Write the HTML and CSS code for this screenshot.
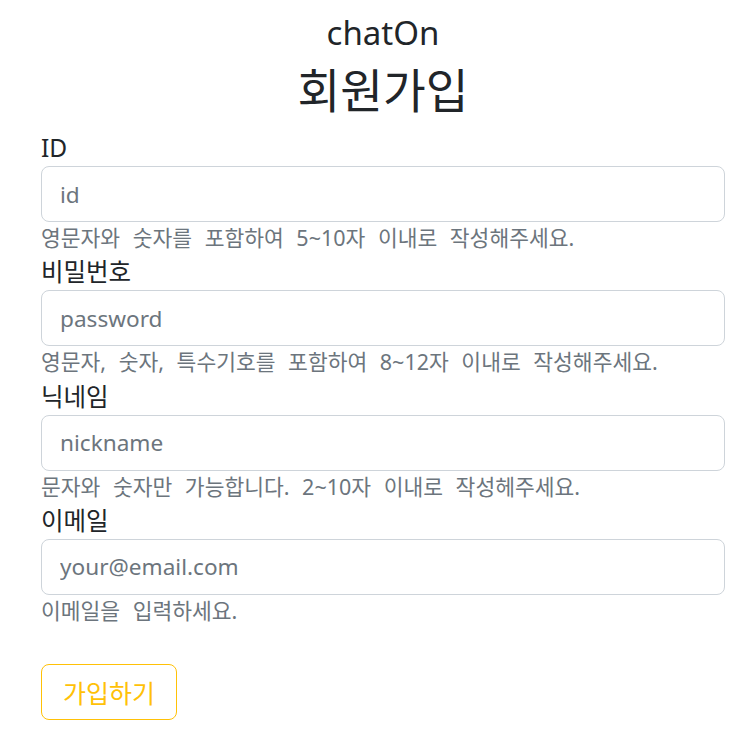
FILE: index.html
```html
<!DOCTYPE html>
<html lang="ko">
<head>
<meta charset="utf-8">
<title>chatOn 회원가입</title>
<link rel="stylesheet" href="styles.css">
</head>
<body>
<main class="page">
  <h2 class="brand">chatOn</h2>
  <h1 class="title">회원가입</h1>
  <form class="signup">
    <div class="field">
      <label class="label" for="uid">ID</label>
      <input class="input" id="uid" type="text" placeholder="id">
      <div class="help">영문자와 숫자를 포함하여 5~10자 이내로 작성해주세요.</div>
    </div>
    <div class="field">
      <label class="label" for="pw">비밀번호</label>
      <input class="input" id="pw" type="password" placeholder="password">
      <div class="help">영문자, 숫자, 특수기호를 포함하여 8~12자 이내로 작성해주세요.</div>
    </div>
    <div class="field">
      <label class="label" for="nick">닉네임</label>
      <input class="input" id="nick" type="text" placeholder="nickname">
      <div class="help">문자와 숫자만 가능합니다. 2~10자 이내로 작성헤주세요.</div>
    </div>
    <div class="field">
      <label class="label" for="mail">이메일</label>
      <input class="input" id="mail" type="email" placeholder="your@email.com">
      <div class="help">이메일을 입력하세요.</div>
    </div>
    <button class="submit" type="button">가입하기</button>
  </form>
</main>
</body>
</html>
```

FILE: styles.css
```css
* { box-sizing: border-box; }

html, body {
  margin: 0;
  padding: 0;
  background: #ffffff;
}

body {
  font-family: "Noto Sans", "Noto Sans CJK KR", sans-serif;
  color: #212529;
}

.page {
  width: 684px;
  margin-left: 41px;
  padding-top: 14px;
  display: flex;
  flex-direction: column;
}

.brand {
  margin: 0;
  font-size: 33px;
  line-height: 38px;
  font-weight: 400;
  text-align: center;
}

.title {
  margin: 12px 0 0;
  font-size: 46.5px;
  line-height: 52px;
  font-weight: 400;
  text-align: center;
}

.signup {
  margin-top: 14px;
  display: flex;
  flex-direction: column;
}

.field {
  display: flex;
  flex-direction: column;
}

.label {
  display: block;
  height: 36px;
  font-size: 24.5px;
  line-height: 36px;
  color: #212529;
}

.input {
  display: block;
  width: 100%;
  height: 56px;
  margin: 0;
  padding: 0 18px;
  border: 1px solid #ced4da;
  border-radius: 8px;
  background: #fff;
  font-family: "Noto Sans", "Noto Sans CJK KR", sans-serif;
  font-size: 22.6px;
  color: #212529;
  outline: none;
}

.input::placeholder {
  color: #6c757d;
  opacity: 1;
}

.help {
  height: 32.33px;
  font-size: 21.5px;
  line-height: 32px;
  word-spacing: 7px;
  color: #6c757d;
  white-space: nowrap;
}

.submit {
  align-self: flex-start;
  margin-top: 37px;
  height: 56px;
  padding: 0 21px;
  border: 1px solid #ffc107;
  border-radius: 8px;
  background: transparent;
  color: #ffc107;
  font-family: "Noto Sans CJK KR", "Noto Sans", sans-serif;
  font-size: 25px;
  line-height: 1.5;
}
```
